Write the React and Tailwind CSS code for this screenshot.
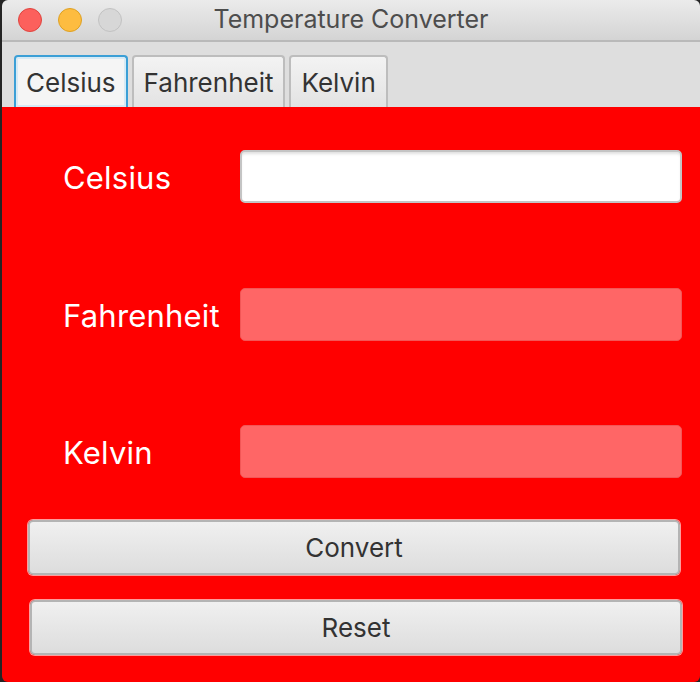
import { useState } from 'react';

const font = { fontFamily: 'Inter, "Noto Sans", sans-serif' };

function Tab({ label, active }) {
  return (
    <div
      className={`h-[52px] flex items-center px-[10px] rounded-t-[4px] text-[26px] text-[#333] ${
        active
          ? 'bg-[#f5f5f5] border-2 border-b-0 border-[#3b9fd6] shadow-[inset_0_0_0_2px_#d6eaf5]'
          : 'bg-gradient-to-b from-[#f3f3f3] to-[#e3e3e3] border-2 border-b-0 border-[#bdbdbd]'
      }`}
    >
      {label}
    </div>
  );
}

function Field({ label, value, disabled }) {
  return (
    <div className="flex items-center h-[53px]">
      <div className="w-[238px] shrink-0 pl-[61px] pt-[4px] text-[31px] tracking-[0.2px] text-white whitespace-nowrap">{label}</div>
      {disabled ? (
        <div className="flex-1 h-full rounded-[5px] bg-[#ff6666] border border-[#f25656]" />
      ) : (
        <input
          value={value}
          readOnly
          className="flex-1 min-w-0 h-full rounded-[5px] bg-white border-2 border-[#c4c4c4] shadow-[inset_0_3px_3px_-1px_#e0e0e0] outline-none"
        />
      )}
    </div>
  );
}

function Button({ children, className }) {
  return (
    <button
      className={`h-[55px] rounded-[5px] border-2 border-[#b4b4b4] bg-gradient-to-b from-[#f0f0f0] to-[#dddddd] text-[26px] text-[#333] shadow-[0_0_0_1px_#ff9c9c] ${className}`}
    >
      {children}
    </button>
  );
}

export default function App() {
  const [tab] = useState('Celsius');

  return (
    <div className="w-[700px] h-[682px] bg-[#242424] overflow-hidden" style={font}>
      <div className="ml-[2px] w-[698px] h-[682px] flex flex-col rounded-[6px] overflow-hidden">
        {/* Title bar */}
        <div className="h-[42px] relative flex items-center justify-center bg-gradient-to-b from-[#ebebeb] to-[#d4d4d4] border-b-2 border-[#b9b9b9]">
          <div className="absolute left-[16px] top-[8px] flex gap-[16px]">
            <span className="w-[24px] h-[24px] rounded-full bg-[#fc605c] border border-[#e0443e]" />
            <span className="w-[24px] h-[24px] rounded-full bg-[#fdbc40] border border-[#dea123]" />
            <span className="w-[24px] h-[24px] rounded-full bg-[#d7d7d7] border border-[#c2c2c2]" />
          </div>
          <span className="text-[25px] text-[#4d4d4d]">Temperature Converter</span>
        </div>

        {/* Tabs */}
        <div className="h-[65px] bg-[#dedede] flex items-end gap-[4px] pl-[12px]">
          {['Celsius', 'Fahrenheit', 'Kelvin'].map((t) => (
            <Tab key={t} label={t} active={t === tab} />
          ))}
        </div>

        {/* Content */}
        <div className="flex-1 bg-[#ff0000] flex flex-col pt-[43px] pr-[18px]">
          <Field label="Celsius" value="" />
          <div className="h-[85px]" />
          <Field label="Fahrenheit" disabled />
          <div className="h-[84px]" />
          <Field label="Kelvin" disabled />
          <div className="h-[42px]" />
          <Button className="ml-[26px] mr-[2px]">Convert</Button>
          <div className="h-[25px]" />
          <Button className="ml-[28px] mr-0">Reset</Button>
        </div>
      </div>
    </div>
  );
}
